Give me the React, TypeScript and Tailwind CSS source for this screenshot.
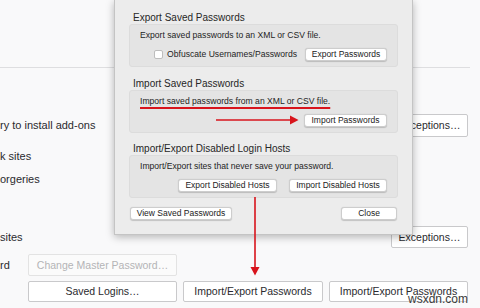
import React from 'react';

function PageButton({ label, className = '', disabled = false }: { label: string; className?: string; disabled?: boolean }) {
  return (
    <div
      className={`flex items-center justify-center rounded-[2px] border text-[10.5px] leading-none ${
        disabled ? 'border-[#e3e3e3] bg-[#fbfbfb] text-[#b4b4b6]' : 'border-[#c9c9cb] bg-white text-[#2a2a2e]'
      } ${className}`}
    >
      {label}
    </div>
  );
}

function DialogButton({ label, className = '' }: { label: string; className?: string }) {
  return (
    <div
      className={`flex h-[13px] items-center justify-center rounded-[3px] border border-[#cdcdcd] bg-white text-[8.5px] leading-none text-[#222] shadow-[0_0.5px_1px_rgba(0,0,0,0.18)] ${className}`}
    >
      {label}
    </div>
  );
}

function Group({ title, children }: { title: string; children: React.ReactNode }) {
  return (
    <div>
      <div className="pl-[4px] text-[10px] leading-[13px] text-[#262626]">{title}</div>
      <div className="rounded-[3px] border border-[#dcdcdc] bg-[#e4e4e4] px-[10px] pb-[5px] pt-[5px]">{children}</div>
    </div>
  );
}

export default function App() {
  return (
    <div className="relative h-[308px] w-[480px] overflow-hidden bg-[#f9f9fa] font-['Liberation_Sans',Arial,sans-serif] text-[#2a2a2e]">
      {/* Preferences page underneath */}
      <div className="pt-[67px] text-[11px] leading-none">
        <div className="h-px w-[470px] bg-[#dedee0]" />
        <div className="mt-[46px] flex h-[23px] w-[468px] items-center justify-between">
          <span>ry to install add-ons</span>
          <PageButton label="Exceptions…" className="h-[23px] w-[77px]" />
        </div>
        <div className="mt-[8px] flex h-[23px] items-center">k sites</div>
        <div className="flex h-[23px] items-center">orgeries</div>
        <div className="mt-[35px] flex h-[22px] w-[468px] items-center justify-between">
          <span>sites</span>
          <PageButton label="Exceptions…" className="h-[22px] w-[77px]" />
        </div>
        <div className="mt-[6px] flex h-[22px] items-center">
          <span className="w-[28px]">rd</span>
          <PageButton label="Change Master Password…" disabled className="h-[22px] w-[149px]" />
        </div>
        <div className="mt-[5px] flex h-[21px] gap-[6px] pl-[28px]">
          <PageButton label="Saved Logins…" className="h-[21px] w-[149px]" />
          <PageButton label="Import/Export Passwords" className="h-[21px] w-[140px]" />
          <PageButton label="Import/Export Passwords" className="h-[21px] w-[139px]" />
        </div>
      </div>

      {/* Modal dialog */}
      <div className="absolute left-[114px] top-0 w-[299px] border-x border-b border-[#c4c4c4] bg-[#ececec] px-[14px] pb-[14px] pt-[11px] text-[8.6px] leading-[11px] text-[#1e1e1e] shadow-[0_2px_8px_rgba(0,0,0,0.28)]">
        <Group title="Export Saved Passwords">
          <div>Export saved passwords to an XML or CSV file.</div>
          <div className="mt-[7px] flex h-[13px] items-center justify-end">
            <div className="h-[9px] w-[9px] rounded-[2px] border border-[#bdbdbd] bg-white" />
            <span className="ml-[4px]">Obfuscate Usernames/Passwords</span>
            <DialogButton label="Export Passwords" className="ml-[8px] w-[82px]" />
          </div>
        </Group>

        <div className="mt-[10px]">
          <Group title="Import Saved Passwords">
            <div>
              <span className="underline decoration-[#d8141c] decoration-[1.5px] underline-offset-[3px]">
                Import saved passwords from an XML or CSV file.
              </span>
            </div>
            <div className="mt-[7px] flex h-[13px] items-center justify-end">
              <DialogButton label="Import Passwords" className="w-[83px]" />
            </div>
          </Group>
        </div>

        <div className="mt-[9px]">
          <Group title="Import/Export Disabled Login Hosts">
            <div>Import/Export sites that never save your password.</div>
            <div className="mt-[7px] flex h-[13px] items-center justify-end gap-[12px]">
              <DialogButton label="Export Disabled Hosts" className="w-[99px]" />
              <DialogButton label="Import Disabled Hosts" className="w-[98px]" />
            </div>
          </Group>
        </div>

        <div className="mt-[9px] flex items-center justify-between px-[1px]">
          <DialogButton label="View Saved Passwords" className="w-[102px]" />
          <DialogButton label="Close" className="w-[56px]" />
        </div>
      </div>

      {/* Red annotation arrows */}
      <svg className="pointer-events-none absolute left-0 top-0" width="480" height="308" viewBox="0 0 480 308">
        <line x1="216" y1="120" x2="291" y2="120" stroke="#d8141c" strokeWidth="1.6" />
        <polygon points="290,115.5 298.5,120 290,124.5" fill="#d8141c" />
        <line x1="255" y1="197" x2="255" y2="268" stroke="#d8141c" strokeWidth="1.6" />
        <polygon points="250.5,267 259.5,267 255,275.5" fill="#d8141c" />
      </svg>

      {/* Watermark */}
      <div className="absolute bottom-[3px] right-[12px] text-[12px] leading-none text-[#3a3a3a] [text-shadow:0_0_2px_#fff]">
        wsxdn.com
      </div>
    </div>
  );
}
